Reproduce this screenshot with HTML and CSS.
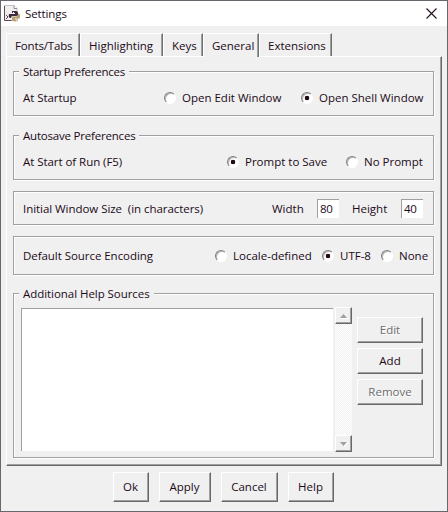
FILE: index.html
```html
<!DOCTYPE html>
<html lang="en">
<head>
<meta charset="utf-8">
<title>Settings</title>
<link rel="stylesheet" href="styles.css">
</head>
<body>
<div class="window">
  <header class="titlebar">
    <svg class="app-icon" width="17" height="17" viewBox="0 0 17 17">
      <path d="M.5 .5h9.500l3 3v12H.5z" fill="#f1f0ee" stroke="#c5c0c3"/>
      <path d="M.5 1v14.500h7" fill="none" stroke="#5d4655"/>
      <path d="M10 .5v3h3" fill="#fff" stroke="#958b92"/>
      <path d="M8 6h4q2 0 2 2v2q0 1-2 1H9q-2 0-2 2H6q-2-1-1-4h6V8H8z" fill="#3e2c3c"/>
      <path d="M14 8.500q2 0 2 3t-2 2h-3v1h3v1q-3 2-6 0v-3q0-1 2-1h3q1 0 1-3" fill="#b79f72"/>
      <path d="M9 7.500h1M12 15h1" stroke="#fff"/>
      <path d="M2 10l2 2-2 2" fill="none" stroke="#67405a"/>
    </svg>
    <h1 class="title">Settings</h1>
    <svg class="close" width="11" height="11" viewBox="0 0 11 11"><path d="M.5 .5l10 10M10.500 .5l-10 10" stroke="#251020" stroke-width="1.100"/></svg>
  </header>
  <nav class="tabs">
    <span class="tab tab-fonts">Fonts/Tabs</span><span class="tab tab-highlight">Highlighting</span><span class="tab tab-keys">Keys</span><span class="tab tab-general active">General</span><span class="tab tab-ext">Extensions</span>
  </nav>
  <main class="panel">
    <section class="group startup">
      <h2 class="legend"><span class="t-startup">Startup Preferences</span></h2>
      <div class="row">
        <span class="name">At Startup</span>
        <label class="option opt-edit"><i class="radio"></i><span>Open Edit Window</span></label>
        <label class="option opt-shell"><i class="radio on"></i><span>Open Shell Window</span></label>
      </div>
    </section>
    <section class="group autosave">
      <h2 class="legend"><span class="t-autosave">Autosave Preferences</span></h2>
      <div class="row">
        <span class="name">At Start of Run (F5)</span>
        <label class="option opt-prompt"><i class="radio on"></i><span>Prompt to Save</span></label>
        <label class="option opt-noprompt"><i class="radio"></i><span>No Prompt</span></label>
      </div>
    </section>
    <section class="group size">
      <div class="row">
        <span class="name">Initial Window Size&nbsp; (in characters)</span>
        <span class="width-label">Width</span><span class="entry">80</span>
        <span class="height-label">Height</span><span class="entry">40</span>
      </div>
    </section>
    <section class="group encoding">
      <div class="row">
        <span class="name">Default Source Encoding</span>
        <label class="option opt-locale"><i class="radio"></i><span>Locale-defined</span></label>
        <label class="option opt-utf"><i class="radio on"></i><span>UTF-8</span></label>
        <label class="option opt-none"><i class="radio"></i><span>None</span></label>
      </div>
    </section>
    <section class="group help">
      <h2 class="legend"><span class="t-help">Additional Help Sources</span></h2>
      <div class="help-body">
        <div class="list"></div>
        <div class="scrollbar">
          <span class="arrow"><svg width="8" height="6" viewBox="0 0 8 6"><path d="M1 5h7v1H1z" fill="#fff"/><path d="M0 5l3.500-4L7 5z" fill="#a0a0a0"/></svg></span>
          <span class="arrow"><svg width="8" height="6" viewBox="0 0 8 6"><path d="M8 1L4.500 5.500 4 5z" fill="#fff" stroke="#fff"/><path d="M0 1h7L3.500 5z" fill="#a0a0a0"/></svg></span>
        </div>
        <div class="side">
          <span class="button disabled">Edit</span>
          <span class="button">Add</span>
          <span class="button disabled">Remove</span>
        </div>
      </div>
    </section>
  </main>
  <footer class="actions">
    <span class="button ok">Ok</span><span class="button apply">Apply</span><span class="button cancel">Cancel</span><span class="button help-btn">Help</span>
  </footer>
</div>
</body>
</html>
```

FILE: styles.css
```css
* { box-sizing: border-box; }
body { margin: 0; font: 11.5px/16px "Open Sans", "Noto Sans", sans-serif; color: #1c0a18; }
h1, h2 { margin: 0; font: inherit; }
.window { width: 448px; height: 512px; border: 1px solid #69666d; background: #f0f0f0; white-space: nowrap; overflow: hidden; }
.titlebar { height: 25px; background: #fff; display: flex; align-items: center; padding: 0 10px 0 3px; }
.title { margin-left: 4px; flex: 1; letter-spacing: -.1px; }
.tabs { height: 23px; margin: 7px 0 0 5px; display: flex; position: relative; z-index: 1; }
.tab { height: 23px; padding: 4px 0 0 8px; border-top: 1px solid #fff; border-left: 1px solid #fff; border-right: 1px solid #6f6f6f; box-shadow: inset -1px 0 #a0a0a0; }
.tab-fonts { width: 74px; letter-spacing: -.15px; }
.tab-highlight { width: 83px; }
.tab-keys { width: 40px; }
.tab-general { width: 56px; }
.tab-ext { width: 73px; }
.active { height: 24px; background: #f0f0f0; }
.panel { width: 436px; height: 410px; margin-left: 5px; padding: 14px 6px 0; border: 1px solid; border-color: #fff #696969 #696969 #fff; box-shadow: inset -1px -1px #a0a0a0; }
.group { width: 421px; border: 1px solid #a0a0a0; box-shadow: 1px 1px #fff, inset 1px 1px #fff; }
.startup { height: 45px; }
.autosave { height: 45px; margin-top: 19px; }
.size { height: 34px; margin-top: 11px; }
.encoding { height: 39px; margin-top: 11px; }
.help { height: 165px; margin-top: 18px; }
.legend { width: max-content; height: 16px; margin: -8px 0 0 5px; padding: 0 4px; background: #f0f0f0; }
.t-startup { letter-spacing: -.25px; }
.t-autosave { letter-spacing: -.2px; }
.t-help { letter-spacing: -.05px; }
.row { display: flex; align-items: center; height: 18px; padding-left: 9px; margin-top: 9px; }
.name { flex: 1; letter-spacing: -.05px; }
.option { display: flex; align-items: center; }
.radio { width: 12px; height: 12px; margin-right: 6px; border-radius: 50%; border: 1px solid; border-color: #808080 #fff #fff #808080; background: #fff; box-shadow: inset 1px 1px #b4b4b4; }
.on { background: radial-gradient(circle at 50% 50%, #210918 0 2px, #fff 2.600px); }
.opt-edit { width: 137px; }
.opt-shell { width: 132px; }
.opt-prompt { width: 119px; }
.opt-noprompt { width: 87px; }
.opt-locale { width: 107px; }
.opt-utf { width: 59px; }
.opt-none { width: 52px; }
.size .row { height: 19px; margin-top: 7px; padding-right: 10px; }
.width-label { width: 45px; }
.height-label { width: 49px; margin-left: 13px; }
.entry { width: 22px; height: 19px; padding: 1px 0 0 2px; background: #fff; border-top: 1px solid #a0a0a0; border-left: 1px solid #a0a0a0; letter-spacing: -.3px; }
.encoding .row { margin-top: 10px; }
.help-body { display: flex; margin: 5px 0 0 7px; height: 145px; }
.list { width: 312px; height: 143px; margin: 1px 1px 0 0; background: #fff; border-top: 1px solid #a0a0a0; border-left: 1px solid #a0a0a0; }
.scrollbar { width: 17px; margin-left: 1px; display: flex; flex-direction: column; justify-content: space-between; background: repeating-conic-gradient(#f0f0f0 0 25%, #fff 0 50%) 0 0 / 2px 2px; }
.arrow { height: 17px; display: flex; align-items: center; justify-content: center; }
.arrow, .button { background: #f0f0f0; border: 1px solid; border-color: #fff #696969 #696969 #fff; box-shadow: inset -1px -1px #a0a0a0; }
.side { width: 66px; margin: 10px 0 0 5px; display: flex; flex-direction: column; gap: 5px; }
.button { height: 26px; display: flex; align-items: center; justify-content: center; }
.disabled { color: #6d6d6d; text-shadow: 1px 1px #fff; }
.actions { display: flex; margin: 6px 0 0 112px; gap: 10px; }
.actions .button { height: 30px; padding-right: 1px; }
.ok { width: 36px; }
.apply { width: 52px; }
.cancel { width: 57px; }
.help-btn { width: 46px; }
```
